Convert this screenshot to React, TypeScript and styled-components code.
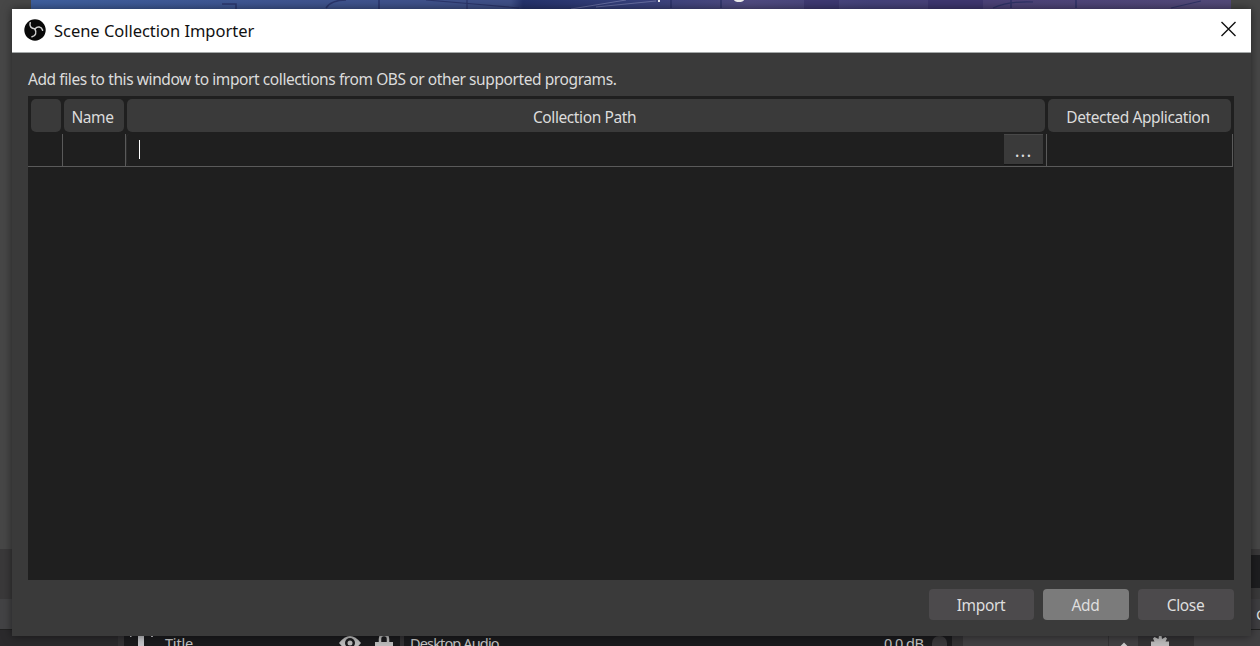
import React from "react";
import styled, { createGlobalStyle } from "styled-components";

const Global = createGlobalStyle`
  *{box-sizing:border-box}
  body{margin:0;background:#474747;overflow:hidden;font-family:"Noto Sans","Open Sans",sans-serif}
`;

const Screen = styled.div`
  position: relative;
  width: 1260px;
  height: 646px;
  overflow: hidden;
`;
const MainWindow = styled.div`
  display: flex;
  flex-direction: column;
  height: 100%;
  background: #474747;
`;
const PreviewArea = styled.div`
  height: 549px;
  padding: 0 29px 0 31px;
  flex: none;
`;
const Preview = styled.svg`
  display: block;
  width: 1200px;
  height: 10px;
`;
const SourceBar = styled.div`
  display: flex;
  justify-content: space-between;
  height: 50px;
  flex: none;
  background: #3a393a;
`;
const DarkField = styled.div`
  width: 9px;
  height: 33px;
  margin-top: 6px;
  background: #1e1e20;
`;
const ToolBar = styled.div`
  display: flex;
  justify-content: flex-end;
  height: 31px;
  flex: none;
  background: #434345;
  border-bottom: 1px solid #222;
`;
const SideButton = styled.div`
  width: 9px;
  height: 30px;
  padding: 3px 0 0 5px;
  overflow: hidden;
  color: #ddd;
  font-size: 15px;
  line-height: 24px;
  background: #3f3e41;
`;
const Docks = styled.div`
  display: flex;
  height: 16px;
  flex: none;
  background: #333234;
`;
const Dock = styled.div<{ $w: number; $bg: string; $ml?: number }>`
  display: flex;
  width: ${(p) => p.$w}px;
  margin-left: ${(p) => p.$ml ?? 0}px;
  height: 16px;
  overflow: hidden;
  background: ${(p) => p.$bg};
  flex: none;
`;
const DockText = styled.span<{ $w: number; $ml: number; $ls?: number }>`
  width: ${(p) => p.$w}px;
  flex: none;
  margin: 3px 0 0 ${(p) => p.$ml}px;
  font-size: 14.5px;
  line-height: 20px;
  height: 20px;
  letter-spacing: ${(p) => p.$ls ?? 0}px;
  color: #c4c4c4;
  white-space: nowrap;
`;
const DockIcon = styled.svg<{ $ml: number }>`
  display: block;
  flex: none;
  margin-left: ${(p) => p.$ml}px;
`;
const VolumeKnob = styled.div`
  width: 15px;
  height: 20px;
  margin: 6px 0 0 6px;
  flex: none;
  border-radius: 7px;
  background: #3a393b;
`;

const Dialog = styled.div`
  position: absolute;
  left: 12px;
  top: 9px;
  width: 1239px;
  height: 627px;
  display: flex;
  flex-direction: column;
  background: #3a3a3a;
  box-shadow: 0 0 9px rgba(0, 0, 0, 0.5);
`;
const TitleBar = styled.header`
  display: flex;
  align-items: center;
  height: 44px;
  flex: none;
  padding: 0 14px 2px 12px;
  background: #fff;
  border-bottom: 1px solid #a4a8a8;
`;
const Title = styled.h1`
  flex: 1;
  margin: 2px 0 0 8px;
  font-size: 16.5px;
  font-weight: 400;
  line-height: 24px;
  letter-spacing: -0.03px;
  color: #111;
`;
const CloseIcon = styled.svg`
  margin-bottom: 1px;
`;
const Content = styled.main`
  display: flex;
  flex-direction: column;
  padding: 13px 16px 0 16px;
`;
const Hint = styled.p`
  margin: 0;
  height: 30px;
  font-size: 15.5px;
  line-height: 27px;
  letter-spacing: -0.41px;
  color: #dcdcdc;
  white-space: nowrap;
`;
const Table = styled.section`
  width: 1206px;
  height: 484px;
  padding: 3px 0 0;
  background: #1f1f1f;
`;
const HeaderRow = styled.div`
  display: grid;
  grid-template-columns: 30px 60px 918px 183px;
  column-gap: 3px;
  padding-left: 3px;
  height: 33px;
`;
const HeaderCell = styled.div`
  display: flex;
  align-items: center;
  justify-content: center;
  padding: 2px 3px 0 0;
  background: #3a3a3a;
  border-radius: 5px;
  font-size: 15.5px;
  letter-spacing: -0.4px;
  color: #dcdcdc;
  white-space: nowrap;
`;
const BodyRow = styled.div`
  display: grid;
  grid-template-columns: 35px 63px 921px 186px;
  width: 1205px;
  margin-top: 2px;
  height: 33px;
  border-bottom: 1px solid #5a5a5a;
`;
const Cell = styled.div`
  display: flex;
  border-right: 1px solid #5a5a5a;
`;
const PathInput = styled.div`
  flex: 1;
  padding: 6px 0 0 12px;
  border-left: 1px solid #2c2c2c;
  border-radius: 4px;
`;
const Caret = styled.div`
  width: 1px;
  height: 19px;
  background: #fff;
`;
const Browse = styled.div`
  width: 39px;
  height: 31px;
  margin-right: 3px;
  background: #3a3a3a;
  border-top: 1px solid #484848;
  border-bottom: 1px solid #161616;
  color: #ddd;
  font-size: 18px;
  line-height: 30px;
  letter-spacing: 1px;
  text-align: center;
`;
const Actions = styled.footer`
  display: flex;
  justify-content: flex-end;
  gap: 9px;
  padding: 9px 1px 0 0;
`;
const Button = styled.button<{ $w: number; $active?: boolean }>`
  width: ${(p) => p.$w}px;
  height: 31px;
  padding: 1px 1px 0 0;
  border: 0;
  border-radius: 4px;
  background: ${(p) => (p.$active ? "#7b7b7b" : "#4c4a4c")};
  color: #dedede;
  font: 15.5px/30px "Noto Sans", "Open Sans", sans-serif;
  letter-spacing: -0.35px;
`;

const ObsLogo = () => (
  <svg width="22" height="22" viewBox="0 0 22 22">
    <circle cx="11" cy="11" r="10.7" fill="#090909" />
    <g fill="none" stroke="#cfcfcf" strokeWidth="1.5" strokeLinecap="round">
      <path d="M6.2 3.8C5.2 7.2 7.1 9.6 10.8 9.7" />
      <path d="M18.6 11.2C17.6 7.6 13.4 7 11.2 9.8" />
      <path d="M8 17.8C11.6 17.2 13 13.6 10.9 10" />
    </g>
  </svg>
);

export default function App() {
  return (
    <Screen>
      <Global />
      <MainWindow>
        <PreviewArea>
          <Preview viewBox="0 0 1200 10" preserveAspectRatio="none">
            <defs>
              <linearGradient id="sky">
                <stop offset="0" stopColor="#3e5f9e" />
                <stop offset=".22" stopColor="#3f5590" />
                <stop offset=".4" stopColor="#3f5088" />
                <stop offset=".41" stopColor="#25336c" />
                <stop offset=".5" stopColor="#36407c" />
                <stop offset=".6" stopColor="#504b80" />
                <stop offset=".7" stopColor="#44427a" />
                <stop offset=".8" stopColor="#4c4278" />
                <stop offset="1" stopColor="#534a79" />
              </linearGradient>
            </defs>
            <rect width="1200" height="10" fill="url(#sky)" />
            <g stroke="#252d61" fill="none" opacity=".75">
              <path d="M191 4h14v6M295 8q5-8 20-8M348 0v10M640 0v8M690 0v8M980 0v8M1045 0v8" strokeWidth="1.5" />
              <path d="M395 0l48 4 45 4M436 0v9M962 8q15-7 40-6M1140 8l30-7" strokeWidth="1.2" />
            </g>
            <path d="M540 9l55-9M565 7l60-6" stroke="#7a80b0" fill="none" opacity=".7" />
            <path d="M897 0h55v9h-55zM773 0h35v9h-35z" fill="#302a67" opacity=".45" />
            <path d="M627 0h2v2h-2zM703 0h10q-1 2-5 2t-5-2z" fill="#eee" />
          </Preview>
        </PreviewArea>
        <SourceBar>
          <span />
          <DarkField />
        </SourceBar>
        <ToolBar>
          <SideButton>C</SideButton>
        </ToolBar>
        <Docks>
          <Dock $w={118} $bg="#2b2a2c" />
          <Dock $w={276} $bg="#1b1b1d" $ml={6}>
            <DockIcon $ml={5} width="26" height="16">
              <path d="M9 5h6v11H9zM1 6h1.500v1H1zM22 6h2v1h-2z" fill="#c4c4c8" />
            </DockIcon>
            <DockText $ml={10} $w={30} $ls={-0.2}>Title</DockText>
            <DockIcon $ml={144} width="22" height="16" viewBox="0 0 22 16">
              <path d="M0 13Q11-1 22 13Q11 27 0 13Z" fill="#bbb" />
              <circle cx="11" cy="13" r="5" fill="#1b1b1d" />
              <circle cx="11" cy="13" r="2.500" fill="#bbb" />
            </DockIcon>
            <DockIcon $ml={14} width="18" height="16" viewBox="0 0 18 16">
              <path d="M5 12V9q0-4 4-4t4 4v3" fill="none" stroke="#bbb" strokeWidth="2.500" />
              <path d="M0 12h18v4H0z" fill="#bbb" />
            </DockIcon>
          </Dock>
          <Dock $w={548} $bg="#1b1b1d" $ml={4}>
            <DockText $ml={6} $w={100} $ls={-0.85}>Desktop Audio</DockText>
            <DockText $ml={374} $w={42} $ls={-0.55}>0.0 dB</DockText>
            <VolumeKnob />
          </Dock>
          <Dock $w={145} $bg="#414042" $ml={11} />
          <Dock $w={29} $bg="#414042" $ml={1}>
            <DockIcon $ml={10} width="10" height="16">
              <path d="M1 18l4-4 4 4" fill="none" stroke="#ccc" strokeWidth="2" />
            </DockIcon>
          </Dock>
          <Dock $w={56} $bg="#333234">
            <DockIcon $ml={12} width="20" height="16" viewBox="0 0 20 16">
              <path d="M8.500 9l.5-3.500h2.500L12 9l3.500-2 1.500 1.500-1.500 3H19V16H1v-4.500h3.500L3 8.500 4.500 7z" fill="#bbb" />
            </DockIcon>
          </Dock>
          <Dock $w={66} $bg="#414042" />
        </Docks>
      </MainWindow>
      <Dialog>
        <TitleBar>
          <ObsLogo />
          <Title>Scene Collection Importer</Title>
          <CloseIcon width="16" height="16" viewBox="0 0 16 16">
            <path d="M.5 1l14 14M14.500 1L.5 15" stroke="#111" strokeWidth="1.4" />
          </CloseIcon>
        </TitleBar>
        <Content>
          <Hint>Add files to this window to import collections from OBS or other supported programs.</Hint>
          <Table>
            <HeaderRow>
              <HeaderCell />
              <HeaderCell>Name</HeaderCell>
              <HeaderCell>Collection Path</HeaderCell>
              <HeaderCell>Detected Application</HeaderCell>
            </HeaderRow>
            <BodyRow>
              <Cell />
              <Cell />
              <Cell>
                <PathInput>
                  <Caret />
                </PathInput>
                <Browse>...</Browse>
              </Cell>
              <Cell />
            </BodyRow>
          </Table>
          <Actions>
            <Button $w={105}>Import</Button>
            <Button $w={86} $active>Add</Button>
            <Button $w={96}>Close</Button>
          </Actions>
        </Content>
      </Dialog>
    </Screen>
  );
}
